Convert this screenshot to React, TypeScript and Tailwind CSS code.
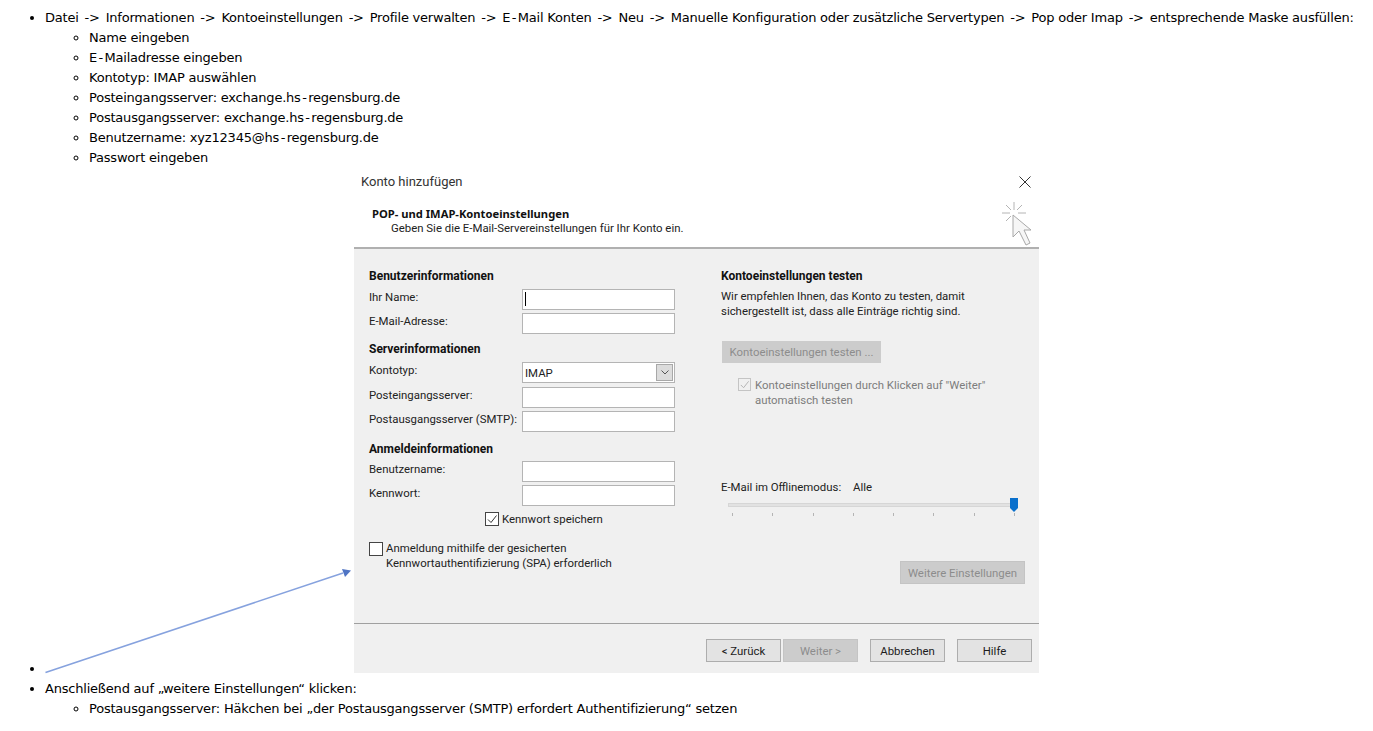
import React from "react";

const dlgFont = "font-['Roboto',sans-serif]";

// pfeile und bindestriche sind in der vorlage deutlich breiter
function T({ children }: { children: string }) {
  return (
    <>
      {children.split(/(->|-)/).map((s, i) => {
        if (s === "->") return <span key={i} className="px-[2px]">-&gt;</span>;
        if (s === "-") return <span key={i} className="px-[1.5px]">-</span>;
        return s;
      })}
    </>
  );
}

function Field({ label, mt, children }: { label: string; mt: string; children?: React.ReactNode }) {
  return (
    <div className={`flex items-start h-[21px] ${mt}`}>
      <span className="w-[153px] leading-4 whitespace-nowrap">{label}</span>
      <div className="w-[153px] h-[21px] bg-white border border-[#b4b4b4] relative">{children}</div>
    </div>
  );
}

function Heading({ children, mt }: { children: React.ReactNode; mt: string }) {
  return <div className={`font-bold text-[12px] leading-4 whitespace-nowrap text-[#111111] ${mt}`}>{children}</div>;
}

function WinButton({ children, disabled, w }: { children: React.ReactNode; disabled?: boolean; w: string }) {
  return (
    <div
      className={`${w} h-[23px] flex items-center justify-center border whitespace-nowrap ${
        disabled ? "bg-[#cccccc] border-[#c4c4c4] text-[#8c8c8c]" : "bg-[#e3e3e3] border-[#adadad] text-[#1c1c1c]"
      }`}
    >
      {children}
    </div>
  );
}

function Dialog() {
  return (
    <div className={`inline-block align-baseline overflow-hidden ml-[309px] w-[685px] h-[505px] bg-white text-[11.4px] text-[#222222] ${dlgFont}`}>
      {/* kopfbereich */}
      <div className="flex justify-between h-[81px] border-b-2 border-[#b0b0b0]">
        <div className="pl-[7px] pt-[5px]">
          <div className="text-[13px] leading-[18px] text-[#333333]">Konto hinzufügen</div>
          <div className="font-bold text-[11.2px] leading-4 pl-[11px] mt-[15px] text-[#111111] font-['Noto_Sans',sans-serif]">POP- und IMAP-Kontoeinstellungen</div>
          <div className="leading-[14px] pl-[30px] -mt-px">Geben Sie die E-Mail-Servereinstellungen für Ihr Konto ein.</div>
        </div>
        <div className="flex flex-col items-end pr-2 pt-2">
          <svg viewBox="0 0 12 12" className="w-3 h-3" fill="none" stroke="#333" strokeWidth="1">
            <path d="M.5.5l11 11M11.5.5l-11 11" />
          </svg>
          <svg viewBox="0 0 30 44" className="w-[30px] h-[44px] mt-[14px]" fill="none" stroke="#b4b4b4" strokeWidth="1">
            <path d="M13 0v8M1 11h8M17 11h8M5 3l5 5M21 3l-5 5M5 19l5-5" />
            <path d="M12 13V35l6-6 7 14 4-2-6-13h7z" fill="#f6f6f6" stroke="#a8a8a8" />
          </svg>
        </div>
      </div>

      {/* hauptbereich */}
      <div className="bg-[#f0f0f0] h-[424px]">
        <div className="flex h-[375px] border-b border-[#a0a0a0] pl-[15px]">
          <div className="w-[352px] pt-[19px]">
            <Heading mt="">Benutzerinformationen</Heading>
            <Field label="Ihr Name:" mt="mt-[5px]">
              <div className="w-px h-[14px] bg-black absolute left-[2px] top-[2px]" />
            </Field>
            <Field label="E-Mail-Adresse:" mt="mt-[3px]" />
            <Heading mt="mt-[7px]">Serverinformationen</Heading>
            <Field label="Kontotyp:" mt="mt-[5px]">
              <div className="flex items-center justify-between h-full pl-[2px] pr-px bg-white">
                <span>IMAP</span>
                <div className="w-[17px] h-[17px] bg-[#dcdcdc] border border-[#a8a8a8] flex items-center justify-center">
                  <svg viewBox="0 0 8 5" className="w-2 h-[5px]" fill="none" stroke="#555" strokeWidth="1"><path d="M.5.5 4 4 7.5.5" /></svg>
                </div>
              </div>
            </Field>
            <Field label="Posteingangsserver:" mt="mt-[4px]" />
            <Field label="Postausgangsserver (SMTP):" mt="mt-[3px]" />
            <Heading mt="mt-[9px]">Anmeldeinformationen</Heading>
            <Field label="Benutzername:" mt="mt-[4px]" />
            <Field label="Kennwort:" mt="mt-[3px]" />
            <div className="flex items-center ml-[116px] mt-[6px] h-[14px]">
              <div className="w-[14px] h-[14px] bg-white border border-[#444] flex items-center justify-center shrink-0">
                <svg viewBox="0 0 12 12" className="w-3 h-3" fill="none" stroke="#333" strokeWidth="1"><path d="M2 6.5 5 9.5 10.5 2.5" /></svg>
              </div>
              <span className="ml-[3px] whitespace-nowrap">Kennwort speichern</span>
            </div>
            <div className="flex items-start mt-[16px]">
              <div className="w-[14px] h-[14px] bg-white border border-[#444] shrink-0" />
              <span className="ml-[3px] -mt-px leading-[15px] whitespace-nowrap">
                Anmeldung mithilfe der gesicherten
                <br />
                Kennwortauthentifizierung (SPA) erforderlich
              </span>
            </div>
          </div>

          <div className="w-[304px] pt-[19px]">
            <Heading mt="">Kontoeinstellungen testen</Heading>
            <p className="leading-[15px] mt-[5px] whitespace-nowrap">
              Wir empfehlen Ihnen, das Konto zu testen, damit
              <br />
              sichergestellt ist, dass alle Einträge richtig sind.
            </p>
            <div className="ml-px mt-[22px] w-[159px] h-[22px] bg-[#cccccc] text-[#8c8c8c] flex items-center justify-center whitespace-nowrap">Kontoeinstellungen testen ...</div>
            <div className="flex items-start ml-[17px] mt-[15px] text-[#7d7d7d]">
              <div className="w-[13px] h-[13px] border border-[#c4c4c4] bg-[#f0f0f0] shrink-0 flex items-center justify-center">
                <svg viewBox="0 0 12 12" className="w-[11px] h-[11px]" fill="none" stroke="#b0b0b0" strokeWidth="1"><path d="M2 6.5 5 9.5 10.5 2.5" /></svg>
              </div>
              <span className="ml-[4px] leading-[15px] whitespace-nowrap">
                Kontoeinstellungen durch Klicken auf "Weiter"
                <br />
                automatisch testen
              </span>
            </div>
            <div className="mt-[71px] flex leading-4 whitespace-nowrap">
              <span className="w-[132px]">E-Mail im Offlinemodus:</span>
              <span>Alle</span>
            </div>
            {/* regler */}
            <div className="relative ml-[7px] mt-[3px] pt-[5px] w-[290px] h-[21px]">
              <div className="h-[4px] bg-[#e2e2e2] border border-[#d6d6d6]" />
              <div className="flex justify-between pl-[4px] pr-[3px] mt-[6px]">
                {[0, 1, 2, 3, 4, 5, 6, 7].map((i) => (
                  <span key={i} className="w-px h-[3px] bg-[#b4b4b4]" />
                ))}
              </div>
              <svg viewBox="0 0 8 14" className="absolute right-0 top-0 w-2 h-[14px]"><path d="M0 0h8v10l-4 4-4-4z" fill="#0a70cc" /></svg>
            </div>
            <div className="flex justify-end mt-[42px]">
              <WinButton disabled w="w-[125px]">Weitere Einstellungen</WinButton>
            </div>
          </div>
        </div>

        <div className="flex justify-end pr-[7px] pt-[15px]">
          <WinButton w="w-[75px]">&lt; Zurück</WinButton>
          <WinButton disabled w="w-[75px] ml-[2px]">Weiter &gt;</WinButton>
          <WinButton w="w-[75px] ml-[12px]">Abbrechen</WinButton>
          <WinButton w="w-[75px] ml-[12px]">Hilfe</WinButton>
        </div>
      </div>
    </div>
  );
}

const felder = [
  "Name eingeben",
  "E-Mailadresse eingeben",
  "Kontotyp: IMAP auswählen",
  "Posteingangsserver: exchange.hs-regensburg.de",
  "Postausgangsserver: exchange.hs-regensburg.de",
  "Benutzername: xyz12345@hs-regensburg.de",
  "Passwort eingeben",
];

export default function App() {
  return (
    <div className="relative bg-white min-h-[731px] pt-2 pl-[5px] text-[13px] leading-5 tracking-[-0.21px] text-black font-['DejaVu_Sans',sans-serif] overflow-hidden">
      <ul className="list-disc pl-10">
        <li className="whitespace-nowrap">
          <T>{"Datei -> Informationen -> Kontoeinstellungen -> Profile verwalten -> E-Mail Konten -> Neu -> Manuelle Konfiguration oder zusätzliche Servertypen -> Pop oder Imap -> entsprechende Maske ausfüllen:"}</T>
          <ul className="list-[circle] pl-[44px]">
            {felder.map((f) => (
              <li key={f}><T>{f}</T></li>
            ))}
          </ul>
        </li>
        <li className="tracking-normal">
          <Dialog />
        </li>
        <li>
          Anschließend auf „weitere Einstellungen“ klicken:
          <ul className="list-[circle] pl-[44px]">
            <li>Postausgangsserver: Häkchen bei „der Postausgangsserver (SMTP) erfordert Authentifizierung“ setzen</li>
          </ul>
        </li>
      </ul>
      {/* pfeil liegt ueber dem bild */}
      <svg className="absolute left-0 top-0 w-[400px] h-[731px] pointer-events-none" viewBox="0 0 400 731" fill="none">
        <path d="M45.5 672.5 343 573" stroke="#86a2de" strokeWidth="1.5" />
        <path d="M351 570.5 342 569 345 577z" fill="#4f74c4" />
      </svg>
    </div>
  );
}
